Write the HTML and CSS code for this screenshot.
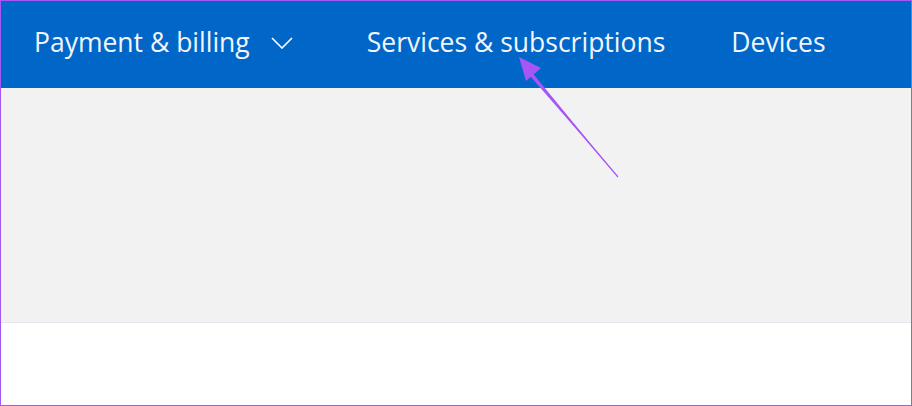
FILE: index.html
```html
<!DOCTYPE html>
<html lang="en">
<head>
<meta charset="utf-8">
<title>Account</title>
<link rel="stylesheet" href="styles.css">
</head>
<body>
<div class="frame">
  <header class="topnav">
    <a class="nav-item nav-item--menu">Payment &amp; billing
      <svg class="chev" width="22" height="12" viewBox="0 0 22 12"><path d="M1 1 L11 11 L21 1" fill="none" stroke="#ffffff" stroke-width="1.6"/></svg>
    </a>
    <a class="nav-item">Services &amp; subscriptions</a>
    <a class="nav-item">Devices</a>
  </header>
  <section class="hero"></section>
  <section class="content"></section>
  <svg class="annot" width="912" height="406" viewBox="0 0 912 406">
    <path d="M618 177 L530 70 L527 72.5 Z" fill="#a855f7"/>
    <path d="M618 177 L528 71" stroke="#a855f7" stroke-width="1.2" fill="none"/>
    <path d="M519 57 L541 68 L526 81 Z" fill="#a855f7"/>
  </svg>
</div>
</body>
</html>
```
FILE: styles.css
```css
html, body {
  margin: 0;
  padding: 0;
}
body {
  width: 912px;
  height: 406px;
  overflow: hidden;
  font-family: "Open Sans", "Noto Sans", sans-serif;
}
.frame {
  position: relative;
  box-sizing: border-box;
  width: 912px;
  height: 406px;
  border: 1px solid #a855f7;
  display: flex;
  flex-direction: column;
  background: #ffffff;
}
.topnav {
  height: 87px;
  background: #0067c8;
  display: flex;
  align-items: center;
  padding-left: 33px;
  gap: 66px;
  box-sizing: border-box;
  padding-bottom: 6px;
}
.nav-item {
  color: #f2f6fc;
  font-size: 26.5px;
  font-weight: 400;
  white-space: nowrap;
  display: flex;
  align-items: center;
}
.nav-item--menu {
  margin-right: 8px;
}
.chev {
  margin-left: 21px;
  margin-top: 2px;
}
.hero {
  height: 234px;
  background: #f2f2f2;
  border-bottom: 1px solid #e6e6ee;
}
.content {
  flex: 1;
  background: #ffffff;
}
.annot {
  position: absolute;
  left: -1px;
  top: -1px;
  pointer-events: none;
}
```
